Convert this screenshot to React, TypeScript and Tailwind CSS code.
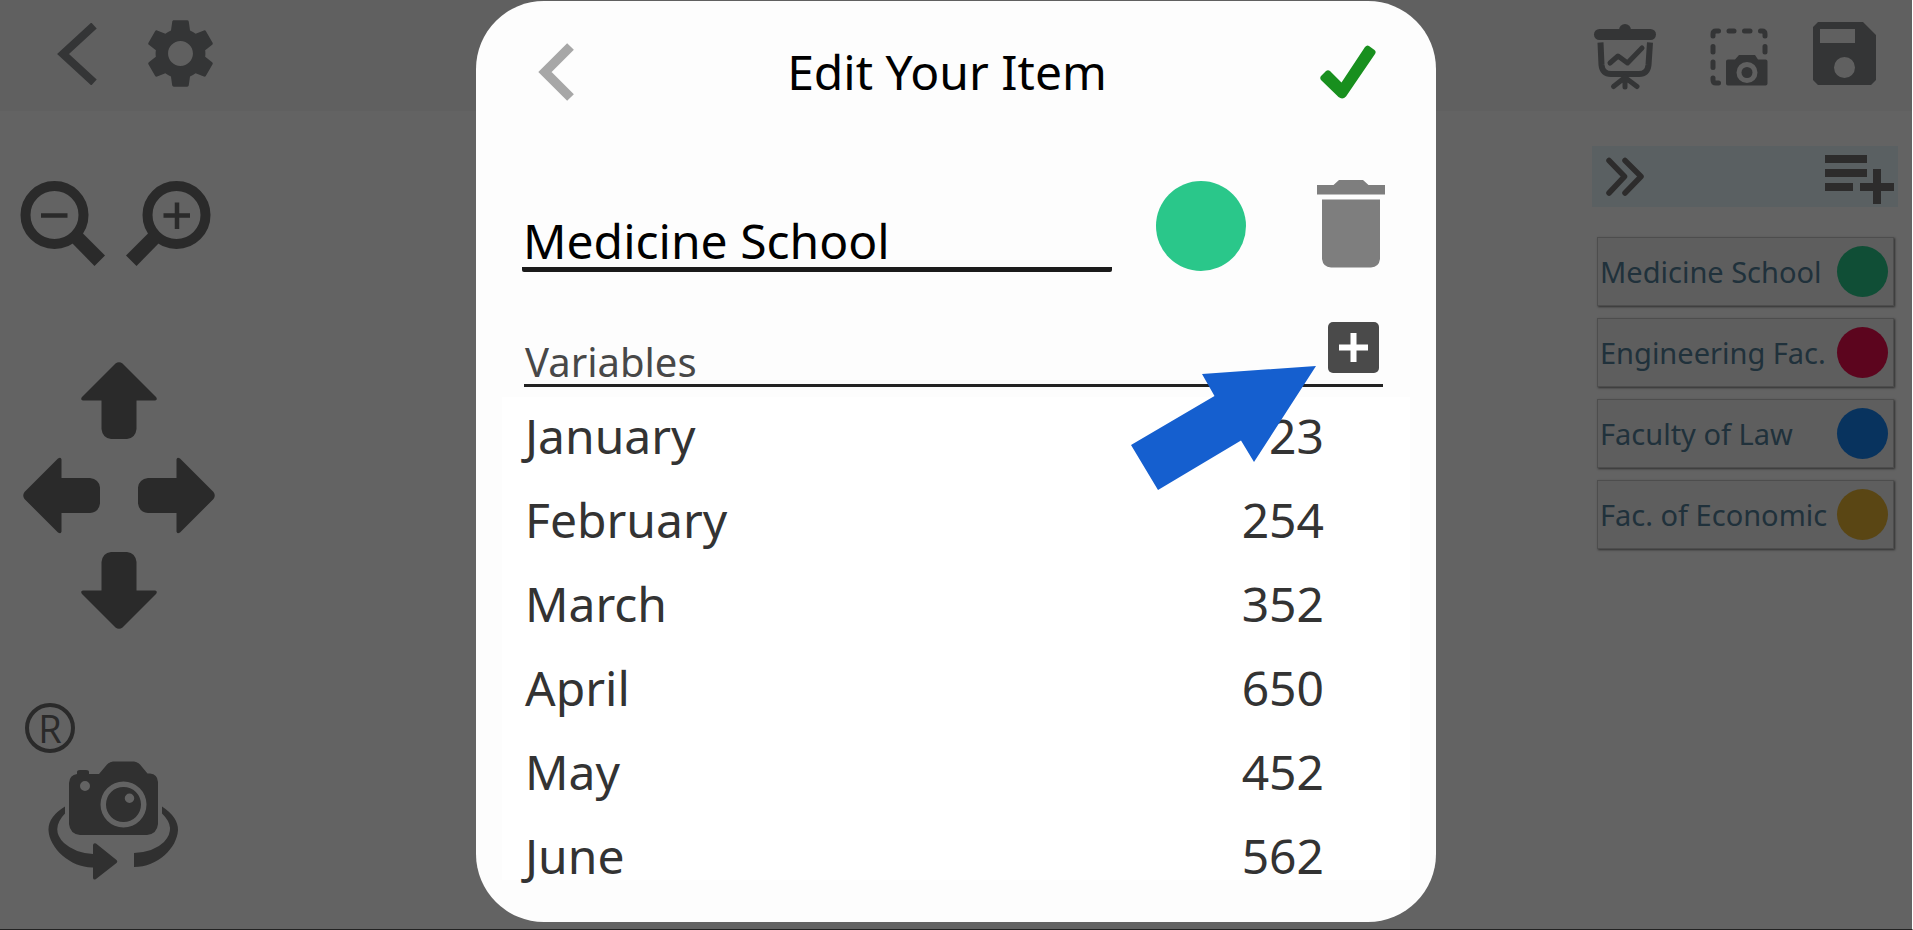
import { useState } from "react";
import type { ReactNode } from "react";
import { MdSettings } from "react-icons/md";

type Item = { name: string; color: string };
type Variable = { label: string; value: number };

const items: Item[] = [
  { name: "Medicine School", color: "bg-[#104e36]" },
  { name: "Engineering Fac.", color: "bg-[#5c051e]" },
  { name: "Faculty of Law", color: "bg-[#08335e]" },
  { name: "Fac. of Economic", color: "bg-[#5a4614]" },
];

const variables: Variable[] = [
  { label: "January", value: 123 },
  { label: "February", value: 254 },
  { label: "March", value: 352 },
  { label: "April", value: 650 },
  { label: "May", value: 452 },
  { label: "June", value: 562 },
];

function IconButton({ label, children }: { label: string; children: ReactNode }) {
  return (
    <button type="button" aria-label={label} className="block shrink-0 cursor-pointer">
      {children}
    </button>
  );
}

function ArrowIcon({ className }: { className: string }) {
  return (
    <svg viewBox="0 0 76 77" className={className} fill="currentColor">
      <path d="M34.500 1.500Q38 -1 41.500 1.500L75 35Q77 38 74 38.500H55.500V67Q54.500 76 46 77H30Q21.500 76 20.500 67V38.500H2Q-1 38 1 35Z" />
    </svg>
  );
}

function Toolbar() {
  return (
    <header className="flex h-[111px] items-start justify-between bg-[#606060] pt-3 pr-9 pl-[57px] text-[#343536]">
      <div className="flex items-center gap-[42px]">
        <IconButton label="Back">
          <svg viewBox="0 0 40 62" className="h-[62px] w-10" fill="none" stroke="currentColor" strokeWidth="8">
            <path d="M37 2.500L6 31L37 59.500" />
          </svg>
        </IconButton>
        <IconButton label="Settings">
          <MdSettings className="h-[83px] w-[83px]" />
        </IconButton>
      </div>
      <div className="flex items-center gap-[45px] pt-[10px]">
        <button type="button" aria-label="Present chart" className="mr-2 shrink-0">
          <svg viewBox="0 0 64 68" className="h-[68px] w-16" fill="none" stroke="currentColor" strokeLinecap="round" strokeLinejoin="round">
            <path d="M26 7a6 6 0 0 1 12 0Z" fill="currentColor" stroke="none" />
            <rect x="1" y="6" width="62" height="11" rx="5.500" fill="currentColor" stroke="none" />
            <path d="M7.500 19.500L8.500 42Q9.500 51 18 51H46Q54.500 51 55.500 42L57 19.500" strokeWidth="6" strokeLinecap="butt" />
            <path d="M17 40L25 33L34.500 40L49 25" strokeWidth="5" />
            <path d="M32 54V64M30 56L20.500 63.500M34 56L44 63.500" strokeWidth="5" />
          </svg>
        </button>
        <IconButton label="Take screenshot">
          <svg viewBox="0 0 58 58" className="h-[58px] w-[58px]" fill="none" stroke="currentColor" strokeWidth="5" strokeLinecap="round" strokeLinejoin="round">
            <path d="M3 8V6Q3 3 6 3H8.500M19 3H24M34.500 3H40M50.500 3H52Q55 3 55 6V8M55 18.500V24M3 18.500V24M3 34V39.500M3 50V52Q3 55 6 55H8.500" />
            <path fill="currentColor" stroke="none" fillRule="evenodd" d="M18 31.500H25L29 27H45L48 31.500H55.500Q57.500 31.500 57.500 33.500V55.500Q57.500 57.500 55.500 57.500H18Q16 57.500 16 55.500V33.500Q16 31.500 18 31.500ZM37 34A10.500 10.500 0 1 0 37 55A10.500 10.500 0 1 0 37 34Z" />
            <circle cx="37" cy="44.500" r="5.500" fill="currentColor" stroke="none" />
          </svg>
        </IconButton>
        <IconButton label="Save">
          <svg viewBox="0 0 63 69" className="h-[69px] w-[63px]" fill="currentColor">
            <path fillRule="evenodd" d="M5 0H50L63 13V58L58 63H5L0 58V5ZM7 7V21H42V7ZM31.500 35A10.500 10.500 0 1 0 31.500 56A10.500 10.500 0 1 0 31.500 35Z" />
          </svg>
        </IconButton>
      </div>
    </header>
  );
}

function CanvasControls() {
  return (
    <nav aria-label="View controls" className="flex flex-col items-start pt-[70px] pl-5 text-[#2a2a2a]">
      <div className="flex gap-[21px]">
        <IconButton label="Zoom out">
          <svg viewBox="0 0 85 85" className="h-[85px] w-[85px]" fill="none" stroke="currentColor">
            <circle cx="34.500" cy="34" r="29" strokeWidth="10" />
            <path d="M21 34.500H47.500" strokeWidth="4.500" />
            <path d="M52.500 62.500L74.500 85L85 74.500L62.500 52Z" fill="currentColor" stroke="none" />
          </svg>
        </IconButton>
        <IconButton label="Zoom in">
          <svg viewBox="0 0 85 85" className="h-[85px] w-[85px]" fill="none" stroke="currentColor">
            <circle cx="50.500" cy="34" r="29" strokeWidth="10" />
            <path d="M37.500 34.500H64M51 21.500V48" strokeWidth="4.500" />
            <path d="M32.500 62.500L10.500 85L0 74.500L22.500 52Z" fill="currentColor" stroke="none" />
          </svg>
        </IconButton>
      </div>
      <div className="mt-24 ml-[3px] flex flex-col items-center gap-[18px]">
        <IconButton label="Move up">
          <ArrowIcon className="h-[77px] w-[76px]" />
        </IconButton>
        <div className="flex gap-[38px]">
          <IconButton label="Move left">
            <ArrowIcon className="h-[77px] w-[77px] -rotate-90" />
          </IconButton>
          <IconButton label="Move right">
            <ArrowIcon className="h-[77px] w-[77px] rotate-90" />
          </IconButton>
        </div>
        <IconButton label="Move down">
          <ArrowIcon className="h-[77px] w-[76px] rotate-180" />
        </IconButton>
      </div>
      <button type="button" className="mt-[74px] ml-[5px] flex h-[50px] w-[50px] items-center justify-center rounded-full border-4 border-current font-['Open_Sans',sans-serif] text-[38px] leading-none">
        R
      </button>
      <div className="mt-2 ml-7 text-[#303030]">
        <IconButton label="Rotate camera">
          <svg viewBox="0 0 130 119" className="h-[119px] w-[130px]" fill="currentColor">
            <path fillRule="evenodd" d="M29 13V11Q29 9 32 9H38Q41 9 41 11V13H51L59 3.500Q62 0.500 65 0.500H86Q89 0.500 92 3.500L99.500 12.500H102Q109.500 13 110 21V63Q109 73 99 74H32Q22 73 21 63V22Q21.500 14 29 13ZM37 20A5 5 0 1 0 37 30A5 5 0 1 0 37 20ZM75.500 20.500A23 23 0 1 0 75.500 66.500A23 23 0 1 0 75.500 20.500Z" />
            <path fillRule="evenodd" d="M75.500 26A17.500 17.500 0 1 0 75.500 61A17.500 17.500 0 1 0 75.500 26ZM81.500 32.500A4.700 4.700 0 1 1 81.500 42A4.700 4.700 0 1 1 81.500 32.500Z" />
            <path d="M17 45.500Q0 56 0.500 69C1 87 23 107 45 106.500V117Q45.500 119.500 48 118L68.500 102Q70 100.500 68.500 99L48 82.500Q45.500 81.500 45 84V93Q27 92 16 82Q2 68 17 52.500Z" />
            <path d="M114 45.500Q130 56 130 69C129 87 110 106 86 106V92Q106 91 116 81Q129 67 114 52.500Z" />
          </svg>
        </IconButton>
      </div>
    </nav>
  );
}

function ItemPanel() {
  return (
    <aside className="flex w-[306px] flex-col pt-[35px]">
      <div className="flex h-[61px] items-start justify-between bg-[#5a6062] pt-[9px] pr-1 pl-[14px] text-[#2d2c2c]">
        <IconButton label="Collapse panel">
          <svg viewBox="0 0 38 44" className="h-11 w-[38px]" fill="none" stroke="currentColor" strokeWidth="5.500" strokeLinecap="round" strokeLinejoin="round">
            <path d="M3 5.500L18.500 21.500L3 38M19 5.500L35 21.500L19 38" />
          </svg>
        </IconButton>
        <IconButton label="Add item">
          <svg viewBox="0 0 69 49" className="h-[49px] w-[69px]" fill="currentColor">
            <path d="M0 0H42V8H0ZM0 14H42V22H0ZM0 28H28V36H0ZM48 14H56V28H69V36H56V49H48V36H35V28H48Z" />
          </svg>
        </IconButton>
      </div>
      <ul className="flex flex-col gap-3 pt-[30px] pr-1 pl-[5px]">
        {items.map((item) => (
          <li key={item.name}>
            <button type="button" className="flex h-[69px] w-full items-center justify-between border border-[#4d4d4d] bg-[#5e5e5e] pr-[5px] pl-[2px] text-left text-[29px] text-[#20313b] shadow-[1px_1px_2px_#303030]">
              <span className="whitespace-nowrap">{item.name}</span>
              <span className={`h-[51px] w-[51px] shrink-0 rounded-full ${item.color}`} />
            </button>
          </li>
        ))}
      </ul>
    </aside>
  );
}

function EditDialog() {
  const [name, setName] = useState("Medicine School");

  return (
    <section role="dialog" aria-modal="true" aria-labelledby="dialog-title" className="relative w-full max-w-[960px] rounded-[68px] bg-[#fdfdfd] pt-[41px] pb-[42px] text-black">
      <div className="flex h-[60px] items-center justify-between pr-[60px] pl-[62px]">
        <IconButton label="Go back">
          <svg viewBox="0 0 36 58" className="h-[58px] w-9" fill="none" stroke="#a7a7a7" strokeWidth="9.500">
            <path d="M32.500 3.500L7 29L32.500 54.500" />
          </svg>
        </IconButton>
        <h1 id="dialog-title" className="text-[48px] leading-[60px]">Edit Your Item</h1>
        <IconButton label="Confirm">
          <svg viewBox="0 0 56 54" className="h-[54px] w-14" fill="#188f1e">
            <path d="M6 26Q8 24.500 10 26L21.500 37.500L45 2Q47 -0.500 49 1L54.500 5Q56.500 6.500 55 9L26 51.500Q22.500 55 18.500 52L1 35Q-0.500 33 1 31Z" />
          </svg>
        </IconButton>
      </div>

      <div className="mt-[78px] flex h-[92px] items-start pr-[51px] pl-[46px]">
        <input
          aria-label="Item name"
          value={name}
          onChange={(event) => setName(event.target.value)}
          className="mr-11 h-[92px] min-w-0 flex-1 rounded-[2px] border-b-[5px] border-[#1b1b1b] bg-transparent pt-[33px] pl-px text-[48px] leading-[54px] outline-none"
        />
        <button type="button" aria-label="Item color" className="mt-px mr-[71px] h-[90px] w-[90px] shrink-0 rounded-full bg-[#2ac78a]" />
        <IconButton label="Delete item">
          <svg viewBox="0 0 68 88" className="h-[88px] w-[68px]" fill="#7e7e7e">
            <path d="M0 5H16.500L22 0H46L51.500 5H68V14.500H0ZM5 19.500H63V79Q62 87 54 87.500H14Q6 87 5 79Z" />
          </svg>
        </IconButton>
      </div>

      <div className="mt-[49px] mr-[53px] ml-12 flex h-[66px] items-end justify-between border-b-[3px] border-[#222]">
        <h2 className="pl-px text-[40px] leading-[44px] text-[#484848]">Variables</h2>
        <button type="button" aria-label="Add variable" className="mr-1 mb-[11px] shrink-0">
          <svg viewBox="0 0 51 51" className="h-[51px] w-[51px]">
            <rect width="51" height="51" rx="5" fill="#4a4a4a" />
            <path d="M11 25.500H40M25.500 11V40" stroke="#fff" strokeWidth="6" />
          </svg>
        </button>
      </div>

      <div className="mx-[26px] mt-[10px] bg-white">
        <table className="w-full border-collapse text-[48px] leading-[48px] text-[#333]">
          <tbody>
            {variables.map((variable) => (
              <tr key={variable.label} className="group align-top">
                <th scope="row" className="pt-[15px] pb-[21px] pl-[23px] text-left font-normal group-last:pb-0">{variable.label}</th>
                <td className="pt-[15px] pr-[86px] pb-[21px] text-right group-last:pb-0">{variable.value}</td>
              </tr>
            ))}
          </tbody>
        </table>
      </div>

      <svg viewBox="0 0 185 124" className="pointer-events-none absolute top-[365px] right-[120px] h-[124px] w-[185px]" fill="#155fcf" aria-hidden="true">
        <path d="M185 0L71 8L83.500 30L0 79L27 124L110 74.500L123 96Z" />
      </svg>
    </section>
  );
}

export default function App() {
  return (
    <div className="relative flex min-h-screen flex-col border-r border-b border-r-white border-b-[#222] bg-[#636363] font-['Noto_Sans',sans-serif]">
      <Toolbar />
      <main className="flex grow justify-between pr-[14px]">
        <CanvasControls />
        <ItemPanel />
      </main>
      <div className="absolute inset-0 flex items-start justify-center pt-px">
        <EditDialog />
      </div>
    </div>
  );
}
